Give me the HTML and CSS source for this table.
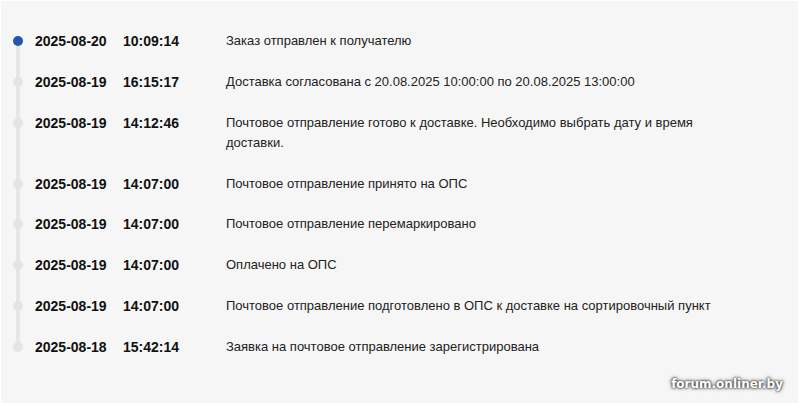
FILE: index.html
```html
<!DOCTYPE html>
<html lang="ru">
<head>
<meta charset="utf-8">
<link rel="stylesheet" href="styles.css">
</head>
<body>
<div class="panel">
  <ul class="timeline">
    <li class="event current"><span class="dot"></span><span class="date">2025-08-20</span><span class="time">10:09:14</span><span class="desc">Заказ отправлен к получателю</span></li>
    <li class="event"><span class="dot"></span><span class="date">2025-08-19</span><span class="time">16:15:17</span><span class="desc">Доставка согласована с 20.08.2025 10:00:00 по 20.08.2025 13:00:00</span></li>
    <li class="event"><span class="dot"></span><span class="date">2025-08-19</span><span class="time">14:12:46</span><span class="desc">Почтовое отправление готово к доставке. Необходимо выбрать дату и время доставки.</span></li>
    <li class="event"><span class="dot"></span><span class="date">2025-08-19</span><span class="time">14:07:00</span><span class="desc">Почтовое отправление принято на ОПС</span></li>
    <li class="event"><span class="dot"></span><span class="date">2025-08-19</span><span class="time">14:07:00</span><span class="desc">Почтовое отправление перемаркировано</span></li>
    <li class="event"><span class="dot"></span><span class="date">2025-08-19</span><span class="time">14:07:00</span><span class="desc">Оплачено на ОПС</span></li>
    <li class="event"><span class="dot"></span><span class="date">2025-08-19</span><span class="time">14:07:00</span><span class="desc">Почтовое отправление подготовлено в ОПС к доставке на сортировочный пункт</span></li>
    <li class="event last"><span class="dot"></span><span class="date">2025-08-18</span><span class="time">15:42:14</span><span class="desc">Заявка на почтовое отправление зарегистрирована</span></li>
  </ul>
  <div class="watermark">forum.onliner.by</div>
</div>
</body>
</html>
```

FILE: styles.css
```css
html, body {
  margin: 0;
  padding: 0;
  background: #ffffff;
}
body {
  padding: 1px 2px 3px 1px;
  height: 406px;
  box-sizing: border-box;
}
.panel {
  position: relative;
  background: #f6f6f6;
  height: 100%;
  box-sizing: border-box;
  padding: 30px 0 0 0;
  font-family: "Liberation Sans", Arial, sans-serif;
  font-size: 14px;
  line-height: 20px;
  color: #222;
}
.timeline {
  list-style: none;
  margin: 0;
  padding: 0;
  display: flex;
  flex-direction: column;
}
.event {
  position: relative;
  display: grid;
  grid-template-columns: 88px 103px 500px;
  align-items: start;
  padding: 0 0 20.86px 34px;
}
.event::before {
  content: "";
  position: absolute;
  left: 15px;
  top: 10px;
  width: 4px;
  height: 100%;
  background: #e6e6e6;
}
.event.last::before {
  display: none;
}
.dot {
  position: absolute;
  left: 12px;
  top: 5px;
  width: 10px;
  height: 10px;
  border-radius: 50%;
  background: #e4e4e4;
}
.current .dot {
  background: #2158ae;
}
.date, .time {
  font-weight: bold;
  color: #111;
}
.desc {
  font-size: 13px;
  color: #222;
}
.watermark {
  position: absolute;
  right: 15px;
  bottom: 11px;
  font-family: "DejaVu Sans", sans-serif;
  font-weight: bold;
  font-size: 12px;
  line-height: 16px;
  color: #ffffff;
  text-shadow: 0 0 2px #333, 0 0 3px #555, 0 0 4px #777;
}
```
